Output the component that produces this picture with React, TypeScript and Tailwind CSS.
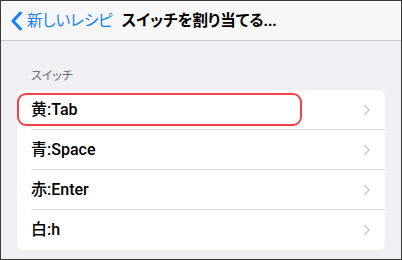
import React from "react";

const font = { fontFamily: '"Liberation Sans", "Noto Sans CJK JP", sans-serif' };
const rowFont = { fontFamily: 'Roboto, "Noto Sans CJK JP", sans-serif' };

function Chevron() {
  return (
    <svg width="8" height="12" viewBox="0 0 8 12" fill="none">
      <path d="M1.5 1.5 L6 6 L1.5 10.5" stroke="#c7c7cc" strokeWidth="1.4" strokeLinecap="round" strokeLinejoin="round" />
    </svg>
  );
}

const rows = ["黄:Tab", "青:Space", "赤:Enter", "白:h"];

export default function App() {
  return (
    <div
      className="w-[402px] h-[260px] box-border border border-[#3a3a3a] bg-[#efeff4] flex flex-col overflow-hidden [font-feature-settings:'palt']"
      style={font}
    >
      <div className="h-[39px] shrink-0 bg-[#f7f7f7] border-b border-[#c8c7cc] flex items-center box-content">
        <svg className="ml-[10px]" width="12" height="20" viewBox="0 0 12 20" fill="none">
          <path d="M9.5 2 L2 10 L9.5 18" stroke="#157efb" strokeWidth="3" strokeLinecap="round" strokeLinejoin="round" />
        </svg>
        <span className="ml-[4px] text-[15.5px] text-[#157efb] leading-none">新しいレシピ</span>
        <span className="ml-[9px] text-[15.5px] font-bold text-black leading-none">スイッチを割り当てる...</span>
      </div>
      <div className="px-[16px] pt-[29px]">
        <div className="pl-[14px] text-[12px] leading-none text-[#6d6d72] h-[20px]">スイッチ</div>
        <div className="relative bg-white rounded-[6px]">
          {rows.map((r, i) => (
            <div key={r} className="pl-[14px] flex h-[40px]">
              <div
                className={
                  "flex-1 flex items-center justify-between pr-[14px] " +
                  (i < rows.length - 1 ? "border-b border-[#dcdce0]" : "")
                }
              >
                <span className="text-[16px] font-medium text-black" style={rowFont}>{r}</span>
                <Chevron />
              </div>
            </div>
          ))}
          <div className="absolute left-0 top-[3px] w-[285px] h-[33px] border-2 border-[#f2414b] rounded-[9px]" />
        </div>
      </div>
    </div>
  );
}
